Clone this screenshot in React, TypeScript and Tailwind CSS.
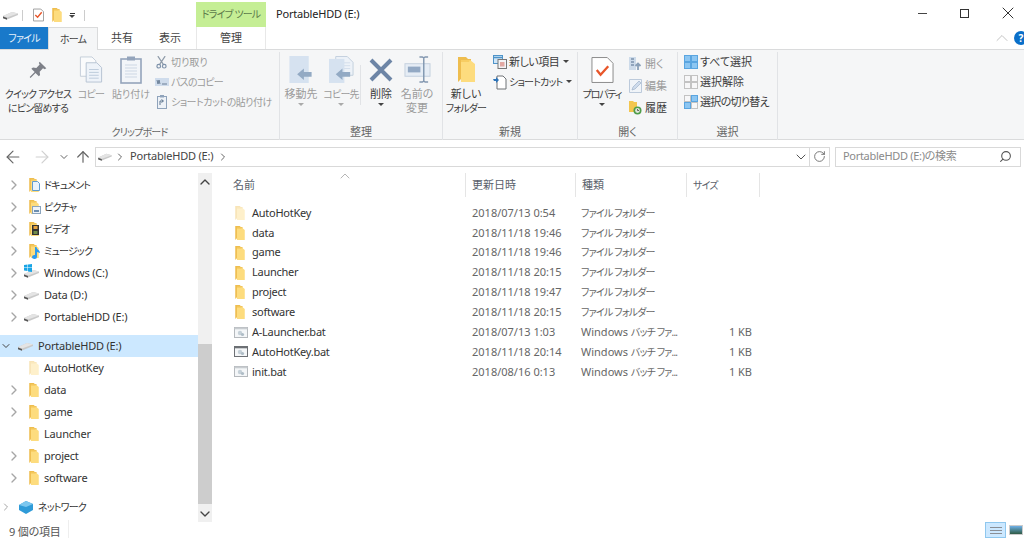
import React from "react";
import { ArrowLeft, ArrowRight, ArrowUp, ChevronDown, ChevronRight, ChevronUp, RotateCw, Search, X } from "lucide-react";

// katakana in Yu Gothic UI runs much narrower than Noto CJK
const K = ({ children }: { children: React.ReactNode }) => (
  <span className="text-[10px] tracking-[-0.8px]">{children}</span>
);

const Folder = ({ faded = false, big = false }: { faded?: boolean; big?: boolean }) => (
  <svg viewBox="0 0 17 25" className={`${big ? "w-[17px] h-[25px]" : "w-[10px] h-[14px]"} shrink-0 ${faded ? "opacity-40" : ""}`}>
    <path d="M0 0h8l2 2h3v20H3l-3 3z" fill="#eebd4f" />
    <path d="M3 3h9l5 4v18H3z" fill="#fddc7e" />
    <path d="M3 3h9l-1 2H3z" fill="#f7cd62" />
  </svg>
);

const Drive = ({ className = "w-[15px] h-[10px]" }: { className?: string }) => (
  <svg viewBox="0 0 15 10" className={`${className} shrink-0`}>
    <path d="M0 6l9-4 6 1.500V5L4 9.500 0 8z" fill="#c9c9c9" />
    <path d="M0 6l4 1.500 11-4-6-1.500z" fill="#e4e4e4" />
    <path d="M0 6.500l4 1.500v1.800L0 8.300z" fill="#555" />
  </svg>
);

const BatFile = ({ dark = false }: { dark?: boolean }) => (
  <svg viewBox="0 0 14 11" className="w-[14px] h-[11px] shrink-0">
    <rect x="0.5" y="0.5" width="13" height="10" fill="#f4f6f8" stroke={dark ? "#6d7075" : "#b5b9bd"} />
    <rect x="0.5" y="0.5" width="13" height="1.800" fill={dark ? "#6d7075" : "#c8ccd0"} />
    <circle cx="6" cy="6" r="2.200" fill="#c5d0d8" />
    <circle cx="8.500" cy="7.500" r="1.600" fill="#aebcc6" />
  </svg>
);

const Pin = () => (
  <svg viewBox="0 0 24 24" className="w-[20px] h-[20px]">
    <path d="M14 2l8 8-2 1-2-1-4 4 .5 4-1.500 1.500-4-4-6 6-1-1 6-6-4-4L6 9l4 .5 4-4-1-2z" fill="#7d8088" />
  </svg>
);

const CopyDocs = () => (
  <svg viewBox="0 0 24 28" className="w-[24px] h-[27px]">
    <path d="M1 1h12l4 4v16H1z" fill="#fafbfc" stroke="#c4cdd8" />
    <path d="M7 7h11l5 5v15H7z" fill="#eef3f9" stroke="#b6c3d2" />
    <path d="M10 14h10M10 17h10M10 20h10M10 23h10" stroke="#bccbdc" />
  </svg>
);

const Clipboard = () => (
  <svg viewBox="0 0 22 28" className="w-[22px] h-[28px]">
    <rect x="1" y="3" width="20" height="24" fill="#f2f5f9" stroke="#94a4bb" strokeWidth="1.600" />
    <rect x="7" y="0.500" width="8" height="4" fill="#94a4bb" />
    <path d="M5 9h12M5 12h12M5 15h12M5 18h12M5 21h12" stroke="#cdd7e4" />
  </svg>
);

const Scissors = () => (
  <svg viewBox="0 0 12 14" className="w-[11px] h-[13px]">
    <path d="M2 0l6 9M10 0L4 9" stroke="#8e9aa8" strokeWidth="1.300" fill="none" />
    <circle cx="3" cy="11" r="2" fill="none" stroke="#7f93ab" strokeWidth="1.300" />
    <circle cx="9" cy="11" r="2" fill="none" stroke="#7f93ab" strokeWidth="1.300" />
  </svg>
);

const PathCopy = () => (
  <svg viewBox="0 0 14 8" className="w-[14px] h-[8px]">
    <rect width="14" height="8" fill="#cfdcec" />
    <path d="M2 2l1 4 1-4 1 4M7 6h5" stroke="#6b7f96" fill="none" />
  </svg>
);

const PasteShortcut = () => (
  <svg viewBox="0 0 10 14" className="w-[10px] h-[14px]">
    <rect x="0.500" y="1.500" width="9" height="12" fill="#eef2f7" stroke="#8fa3bb" />
    <rect x="3" y="0" width="4" height="2.500" fill="#8fa3bb" />
    <path d="M3 10V6h3M4.500 4.500L6.500 6 4.500 7.500" stroke="#5e7690" fill="none" />
  </svg>
);

const MoveTo = () => (
  <svg viewBox="0 0 24 28" className="w-[24px] h-[27px]">
    <rect width="20" height="28" fill="#d6e2f0" />
    <path d="M8 19l7-6v3.500h8v5h-8V25z" fill="#93aac4" />
  </svg>
);

const CopyTo = () => (
  <svg viewBox="0 0 26 28" className="w-[25px] h-[27px]">
    <path d="M7 .5h12l6 6V20H7z" fill="#edf2f8" stroke="#c2cfde" />
    <path d="M10 7h12M10 10h12M10 13h12" stroke="#d3deeb" />
    <rect y="3" width="16" height="25" fill="#d6e2f0" />
    <path d="M7 19l7-6v3.500h8v5h-8V25z" fill="#93aac4" />
  </svg>
);

const Rename = () => (
  <svg viewBox="0 0 28 28" className="w-[27px] h-[27px]">
    <rect x="1" y="8" width="26" height="13" fill="#e6edf5" stroke="#c4d0de" />
    <rect x="4" y="11" width="13" height="6" fill="#93a9c4" />
    <path d="M16 1h3l1.500 1L22 1h3M20.500 2v24M16 27h3l1.500-1 1.500 1h3" stroke="#8297b0" strokeWidth="1.500" fill="none" />
  </svg>
);

const NewItem = () => (
  <svg viewBox="0 0 14 14" className="w-[14px] h-[14px]">
    <rect x="0.500" y="0.500" width="9" height="8" fill="#cfe6f8" stroke="#4f94c9" />
    <path d="M0 2.500h10" stroke="#4f94c9" strokeWidth="1.500" />
    <rect x="5" y="4.500" width="8.500" height="9" fill="#f3f4f6" stroke="#777" />
    <rect x="7" y="7" width="4.500" height="4.500" fill="#e2a8a2" />
  </svg>
);

const ShortcutIcon = () => (
  <svg viewBox="0 0 14 15" className="w-[14px] h-[15px]">
    <path d="M4 1h6l3 3v10H4z" fill="#fff" stroke="#6e7277" />
    <path d="M0 4h3V2l3 3-3 3V6H1z" fill="#2e74b8" />
  </svg>
);

const Properties = () => (
  <svg viewBox="0 0 24 28" className="w-[23px] h-[28px]">
    <path d="M1 1h16l6 6v20H1z" fill="#fff" stroke="#888" />
    <path d="M6 14l4 5 8-9" stroke="#e8562a" strokeWidth="2.400" fill="none" />
  </svg>
);

const OpenIcon = () => (
  <svg viewBox="0 0 13 14" className="w-[13px] h-[14px]">
    <rect width="7" height="13" fill="#cddbea" />
    <path d="M2 2h3M2 5h3M2 8h3" stroke="#7c93ad" strokeWidth="1.400" />
    <path d="M9 13V7M6.500 9L9 6.500 11.500 9" stroke="#8aa0b8" strokeWidth="1.800" fill="none" />
  </svg>
);

const EditIcon = () => (
  <svg viewBox="0 0 13 14" className="w-[13px] h-[14px]">
    <path d="M.5.500h12v13H.5z" fill="#f0f4f8" stroke="#bccadb" />
    <path d="M3 11l1-3 6-6 2 2-6 6z" fill="#cfdcec" stroke="#9fb3ca" strokeWidth=".7" />
  </svg>
);

const HistoryIcon = () => (
  <svg viewBox="0 0 13 14" className="w-[13px] h-[14px]">
    <path d="M0 0h4l1 1h3v10H0z" fill="#f3c64f" />
    <circle cx="8.500" cy="9.500" r="4" fill="#4f9d4a" />
    <circle cx="8.500" cy="9.500" r="2.400" fill="#dfe6da" />
    <path d="M8.500 8v1.500H10" stroke="#444" strokeWidth=".8" fill="none" />
  </svg>
);

const Grid4 = ({ variant }: { variant: "all" | "none" | "invert" }) => {
  const blue = { fill: "#8cc6f2", stroke: "#5aa5e0" };
  const gray = { fill: "#f7f7f8", stroke: "#c3c3c3" };
  const a = variant === "all" ? blue : gray;
  const b = variant === "none" ? gray : blue;
  const c = variant === "none" ? gray : blue;
  const d = variant === "all" ? blue : gray;
  return (
    <svg viewBox="0 0 14 14" className="w-[14px] h-[14px]">
      <rect x=".5" y=".5" width="6" height="6" {...a} />
      <rect x="7.500" y=".5" width="6" height="6" {...b} />
      <rect x=".5" y="7.500" width="6" height="6" {...c} />
      <rect x="7.500" y="7.500" width="6" height="6" {...d} />
    </svg>
  );
};

const Caret = ({ className = "" }: { className?: string }) => (
  <span className={`inline-block w-0 h-0 border-x-[3px] border-x-transparent border-t-[3px] border-t-[#444] ${className}`} />
);

const Big = ({ w, icon, label, dim, caret }: { w: string; icon: React.ReactNode; label: React.ReactNode; dim?: boolean; caret?: boolean }) => (
  <div className={`${w} flex flex-col items-center shrink-0 text-center leading-[14px] whitespace-nowrap ${dim ? "text-[#9b9b9b]" : "text-[#3c3c3c]"}`}>
    <div className="flex items-center justify-center h-[35px]">{icon}</div>
    <div>{label}</div>
    {caret && <Caret className={`mt-[2px] ${dim ? "border-t-[#aaa]" : ""}`} />}
  </div>
);

const Small = ({ icon, label, dim, caret }: { icon: React.ReactNode; label: React.ReactNode; dim?: boolean; caret?: boolean }) => (
  <div className={`h-[20px] flex items-center whitespace-nowrap ${dim ? "text-[#9b9b9b]" : "text-[#3c3c3c]"}`}>
    <span className="w-[15px] flex justify-center mr-[2px]">{icon}</span>
    {label}
    {caret && <Caret className="ml-[4px] mb-[1px]" />}
  </div>
);

const Group = ({ w, label, children }: { w: string; label: React.ReactNode; children: React.ReactNode }) => (
  <div className={`${w} shrink-0 h-[88px] mt-[2px] border-r border-[#e1e3e6] flex flex-col justify-between`}>
    <div className="flex">{children}</div>
    <div className="h-[14px] leading-[14px] text-center text-[#666] mb-[1px]">{label}</div>
  </div>
);

const NavRow = ({ level = 1, open, noChevron, icon, label, selected }: { level?: 0 | 1; open?: boolean; noChevron?: boolean; icon: React.ReactNode; label: React.ReactNode; selected?: boolean }) => (
  <div className={`h-[22px] flex items-center whitespace-nowrap text-[#333] ${selected ? "bg-[#cce8ff]" : ""}`}>
    <span className={`flex justify-center shrink-0 ${level === 1 ? "w-[28px]" : "w-[12px]"}`}>
      {!noChevron && (open ? <ChevronDown className="w-[14px] h-[14px] text-[#444]" strokeWidth={2} /> : <ChevronRight className="w-[16px] h-[16px] text-[#a6a6a6]" strokeWidth={2} />)}
    </span>
    <span className={`${level === 1 ? "w-[11px]" : "w-[21px]"} flex justify-end shrink-0 mr-[5px]`}>{icon}</span>
    <span className="tracking-[-0.2px]">{label}</span>
  </div>
);

const QuickFolder = ({ badge }: { badge: React.ReactNode }) => (
  <span className="relative w-[10px] h-[14px] flex">
    <Folder />
    <span className="absolute left-[3px] top-[3px]">{badge}</span>
  </span>
);

const files: { name: string; date: string; bat?: boolean; dark?: boolean; faded?: boolean }[] = [
  { name: "AutoHotKey", date: "2018/07/13 0:54", faded: true },
  { name: "data", date: "2018/11/18 19:46" },
  { name: "game", date: "2018/11/18 19:46" },
  { name: "Launcher", date: "2018/11/18 20:15" },
  { name: "project", date: "2018/11/18 19:47" },
  { name: "software", date: "2018/11/18 20:15" },
  { name: "A-Launcher.bat", date: "2018/07/13 1:03", bat: true },
  { name: "AutoHotKey.bat", date: "2018/11/18 20:14", bat: true, dark: true },
  { name: "init.bat", date: "2018/08/16 0:13", bat: true },
];

export default function App() {
  return (
    <div className="w-[1024px] h-[538px] overflow-hidden bg-white text-[11px] [font-feature-settings:'palt'] font-['Noto_Sans','Noto_Sans_CJK_JP',sans-serif] flex flex-col">
      {/* title bar */}
      <div className="h-[27px] flex items-start shrink-0">
        <div className="w-[196px] h-full flex items-center pl-[3px] pt-[3px]">
          <Drive />
          <span className="w-px h-[11px] bg-[#ccc] ml-[4px]" />
          <svg viewBox="0 0 12 14" className="w-[11px] h-[14px] ml-[10px]">
            <path d="M.5.500h8l3 3v10H.5z" fill="#fff" stroke="#999" />
            <path d="M2.500 7l2.500 2.500L9.500 4" stroke="#e8562a" strokeWidth="1.500" fill="none" />
          </svg>
          <span className="ml-[8px] flex"><Folder /></span>
          <span className="ml-[7px] flex flex-col items-center gap-[1px]">
            <span className="w-[5px] h-px bg-[#333]" />
            <Caret className="border-t-[#333]" />
          </span>
          <span className="w-px h-[11px] bg-[#ccc] ml-[9px]" />
        </div>
        <div className="w-[70px] h-[25px] mt-[2px] bg-[#c5ee95] text-[#5c7a4a] flex items-center justify-center whitespace-nowrap"><K>ドライブ ツール</K></div>
        <div className="ml-[10px] mt-[6px] text-[#222] leading-[15px] tracking-[-0.2px]">PortableHDD (E:)</div>
        <div className="ml-auto flex items-center h-[26px] text-[#333]">
          <span className="w-[42px] flex justify-center"><span className="w-[9px] h-px bg-[#444]" /></span>
          <span className="w-[43px] flex justify-center"><span className="w-[9px] h-[9px] border border-[#333]" /></span>
          <span className="w-[38px] flex justify-center pl-[6px]"><X className="w-[20px] h-[20px]" strokeWidth={1.200} /></span>
        </div>
      </div>

      {/* tabs */}
      <div className="h-[23px] flex shrink-0 border-b border-[#dadbdc] text-[#444] relative">
        <div className="w-[48px] bg-[#1979ca] text-[#e8f2fb] flex items-center justify-center"><K>ファイル</K></div>
        <div className="w-[50px] h-[23px] bg-[#f5f6f7] border-x border-t border-[#dadbdc] flex items-center justify-center"><K>ホーム</K></div>
        <div className="w-[48px] flex items-center justify-center">共有</div>
        <div className="w-[48px] flex items-center justify-center">表示</div>
        <div className="w-[2px]" />
        <div className="w-[70px] h-[22px] border-x border-[#e8e8e8] flex items-center justify-center">管理</div>
        <div className="ml-auto flex items-center">
          <ChevronUp className="w-[20px] h-[20px] text-[#c4c4c4]" strokeWidth={1.200} />
          <span className="w-[14px] h-[14px] ml-[2px] -mr-[4px] rounded-full bg-[#0a6fc9] text-white text-[10px] font-bold leading-[14px] text-center">?</span>
        </div>
      </div>

      {/* ribbon */}
      <div className="h-[90px] bg-[#f5f6f7] border-b border-[#dadbdc] flex shrink-0">
        <Group w="w-[280px]" label={<K>クリップボード</K>}>
          <Big w="w-[76px]" icon={<Pin />} label={<K>クイック アクセス<br />にピン留めする</K>} />
          <Big w="w-[30px]" dim icon={<CopyDocs />} label={<K>コピー</K>} />
          <span className="w-[6px] shrink-0" />
          <Big w="w-[38px]" dim icon={<Clipboard />} label={<span className="text-[10px]">貼り付け</span>} />
          <div className="ml-[4px]">
            <Small dim icon={<Scissors />} label={<span className="text-[10px]">切り取り</span>} />
            <Small dim icon={<PathCopy />} label={<K>パスのコピー</K>} />
            <Small dim icon={<PasteShortcut />} label={<span className="text-[10px] tracking-[-0.5px]">ショートカットの貼り付け</span>} />
          </div>
        </Group>
        <Group w="w-[163px]" label="整理">
          <Big w="w-[42px]" dim caret icon={<MoveTo />} label="移動先" />
          <Big w="w-[38px]" dim caret icon={<CopyTo />} label={<K>コピー先</K>} />
          <span className="w-px h-[40px] mt-[13px] bg-[#e1e3e6] shrink-0" />
          <Big w="w-[40px]" caret icon={<svg viewBox="0 0 24 24" className="w-[24px] h-[24px]"><path d="M2 2L22 22M22 2L2 22" stroke="#6d85a6" strokeWidth="4" /></svg>} label="削除" />
          <Big w="w-[32px]" dim icon={<Rename />} label={<>名前の<br />変更</>} />
        </Group>
        <Group w="w-[135px]" label="新規">
          <Big w="w-[46px]" icon={<Folder big />} label={<>新しい<br /><K>フォルダー</K></>} />
          <div className="ml-[3px]">
            <Small icon={<NewItem />} label={<span className="tracking-[-0.5px]">新しい項目</span>} caret />
            <Small icon={<ShortcutIcon />} label={<K>ショートカット</K>} caret />
          </div>
        </Group>
        <Group w="w-[100px]" label="開く">
          <Big w="w-[48px]" caret icon={<Properties />} label={<span className="text-[10px] tracking-[-1.2px]">プロパティ</span>} />
          <div className="mt-[2px] ml-[2px]">
            <div className="h-[22px]"><Small dim icon={<OpenIcon />} label="開く" /></div>
            <div className="h-[22px]"><Small dim icon={<EditIcon />} label="編集" /></div>
            <div className="h-[22px]"><Small icon={<HistoryIcon />} label="履歴" /></div>
          </div>
        </Group>
        <Group w="w-[100px]" label="選択">
          <div className="ml-[5px]">
            <Small icon={<Grid4 variant="all" />} label="すべて選択" />
            <Small icon={<Grid4 variant="none" />} label="選択解除" />
            <Small icon={<Grid4 variant="invert" />} label={<span className="tracking-[-0.7px]">選択の切り替え</span>} />
          </div>
        </Group>
      </div>

      {/* address bar */}
      <div className="h-[33px] flex items-center shrink-0 text-[#444]">
        <div className="w-[95px] flex items-center shrink-0">
          <span className="w-[26px] flex justify-center"><ArrowLeft className="w-[20px] h-[20px] text-[#666]" strokeWidth={1.400} /></span>
          <span className="w-[32px] flex justify-center"><ArrowRight className="w-[20px] h-[20px] text-[#d0d0d0]" strokeWidth={1.400} /></span>
          <span className="w-[12px] flex justify-center"><ChevronDown className="w-[14px] h-[14px] text-[#666]" strokeWidth={2} /></span>
          <span className="w-[25px] flex justify-center"><ArrowUp className="w-[18px] h-[18px] text-[#666]" strokeWidth={1.600} /></span>
        </div>
        <div className="w-[735px] h-[20px] border border-[#d9d9d9] flex items-center shrink-0">
          <span className="ml-[2px]"><Drive className="w-[14px] h-[9px]" /></span>
          <ChevronRight className="w-[12px] h-[12px] ml-[2px] text-[#666]" strokeWidth={2} />
          <span className="ml-[4px] tracking-[-0.2px]">PortableHDD (E:)</span>
          <ChevronRight className="w-[12px] h-[12px] ml-[4px] text-[#666]" strokeWidth={2} />
          <ChevronDown className="w-[16px] h-[16px] ml-auto text-[#555]" strokeWidth={1.500} />
          <span className="h-full w-[20px] border-l border-[#d9d9d9] flex items-center justify-center">
            <RotateCw className="w-[13px] h-[13px] text-[#666]" strokeWidth={1.600} />
          </span>
        </div>
        <div className="w-[186px] h-[20px] ml-[5px] border border-[#d9d9d9] flex items-center pl-[7px] text-[#8a8a8a] whitespace-nowrap tracking-[-0.3px]">
          PortableHDD (E:)の検索
          <Search className="w-[13px] h-[13px] ml-auto mr-[8px] -scale-x-100 text-[#555]" strokeWidth={2} />
        </div>
      </div>

      {/* body */}
      <div className="h-[349px] flex shrink-0">
        <div className="w-[198px] shrink-0 overflow-hidden pt-px">
          <NavRow icon={<QuickFolder badge={<svg viewBox="0 0 8 10" className="w-[8px] h-[10px]"><path d="M.5.500h5l2 2v7H.5z" fill="#e9f2fa" stroke="#5e9bd0" /></svg>} />} label={<K>ドキュメント</K>} />
          <NavRow icon={<QuickFolder badge={<svg viewBox="0 0 9 8" className="w-[9px] h-[8px] mt-[3px]"><rect x=".5" y=".5" width="8" height="7" fill="#eef3f8" stroke="#8aa4bd" /><rect x="2" y="4" width="5" height="2" fill="#6d8fb0" /></svg>} />} label={<K>ピクチャ</K>} />
          <NavRow icon={<QuickFolder badge={<svg viewBox="0 0 7 10" className="w-[7px] h-[10px]"><rect width="7" height="10" fill="#333" /><rect x="1.500" y="1" width="4" height="3" fill="#e8a33d" /><rect x="1.500" y="6" width="4" height="3" fill="#6f8c4a" /></svg>} />} label={<K>ビデオ</K>} />
          <NavRow icon={<QuickFolder badge={<svg viewBox="0 0 9 12" className="w-[9px] h-[12px]"><path d="M3 0h1.500c.5 3 3.500 3 3.500 6l-3-1v5a2.500 2 0 1 1-2-2z" fill="#2b9bf0" /></svg>} />} label={<K>ミュージック</K>} />
          <NavRow icon={<span className="relative flex"><Drive /><svg viewBox="0 0 8 8" className="absolute -top-[4px] left-0 w-[8px] h-[8px]"><path d="M0 1l3.500-.5V3.500H0zM4 .4L8 0v3.500H4zM0 4h3.500v3L0 6.500zM4 4h4v4l-4-.5z" fill="#19a5e6" /></svg></span>} label="Windows (C:)" />
          <NavRow icon={<Drive />} label="Data (D:)" />
          <NavRow icon={<Drive />} label="PortableHDD (E:)" />
          <div className="h-[7px]" />
          <NavRow level={0} open selected icon={<Drive />} label="PortableHDD (E:)" />
          <NavRow noChevron icon={<Folder faded />} label="AutoHotKey" />
          <NavRow icon={<Folder />} label="data" />
          <NavRow icon={<Folder />} label="game" />
          <NavRow noChevron icon={<Folder />} label="Launcher" />
          <NavRow icon={<Folder />} label="project" />
          <NavRow icon={<Folder />} label="software" />
          <div className="h-[7px]" />
          <NavRow level={0} icon={<svg viewBox="0 0 14 13" className="w-[14px] h-[13px]"><path d="M7 0l7 3v6l-7 4-7-4V4z" fill="#2f9bd8" /><path d="M7 0l7 3-7 3-7-2z" fill="#7cc7ef" /></svg>} label={<K>ネットワーク</K>} />
        </div>
        <div className="w-[14px] shrink-0 bg-[#f0f0f0] flex flex-col items-center">
          <ChevronUp className="w-[16px] h-[16px] mt-[1px] text-[#444]" strokeWidth={2} />
          <div className="w-full h-[160px] mt-[154px] bg-[#cdcdcd]" />
          <ChevronDown className="w-[16px] h-[16px] mt-[2px] text-[#444]" strokeWidth={2} />
        </div>
        <div className="flex-1 pl-[15px]">
          <div className="h-[24px] relative grid grid-cols-[239px_110px_111px_73px] text-[#5a5f6b]">
            <ChevronUp className="absolute left-[110px] -top-[5px] w-[16px] h-[16px] text-[#b5b5b5]" strokeWidth={1.500} />
            {["名前", "更新日時", "種類"].map((h) => (
              <div key={h} className="border-r border-[#e5e5e5] pl-[6px] pt-[1px] flex items-center">{h}</div>
            ))}
            <div className="border-r border-[#e5e5e5] pl-[6px] pt-[1px] flex items-center"><K>サイズ</K></div>
          </div>
          <div className="mt-[6px]">
            {files.map((f) => (
              <div key={f.name} className="h-[19.870px] grid grid-cols-[239px_110px_111px_73px] items-center whitespace-nowrap text-[#666]">
                <div className="flex items-center text-[#333] pl-[6px]">
                  <span className="w-[19px] flex shrink-0 pl-[1px]">{f.bat ? <BatFile dark={f.dark} /> : <span className="pl-[1px] flex"><Folder faded={f.faded} /></span>}</span>
                  <span className="tracking-[-0.25px]">{f.name}</span>
                </div>
                <div className="pl-[6px]">{f.date}</div>
                <div className="pl-[5px]">{f.bat ? <>Windows <K>バッチ ファ...</K></> : <K>ファイル フォルダー</K>}</div>
                <div className="pr-[8px] text-right">{f.bat ? "1 KB" : ""}</div>
              </div>
            ))}
          </div>
        </div>
      </div>

      {/* status bar */}
      <div className="flex-1 flex items-center text-[#555] min-h-0">
        <span className="pl-[9px] pt-[4px] w-[69px] border-r border-[#eee] tracking-[-0.2px]">9 個の項目</span>
        <div className="ml-auto flex items-center self-end">
          <span className="w-[21px] h-[16px] bg-[#cce8ff] border border-[#8fc7ee] flex flex-col justify-center gap-[2px] pl-[4px]">
            <span className="w-[12px] h-px bg-[#8a8f96]" />
            <span className="w-[12px] h-px bg-[#8a8f96]" />
            <span className="w-[12px] h-px bg-[#8a8f96]" />
          </span>
          <span className="w-[14px] h-[10px] ml-[3px] mr-[1px] mb-[1px] border border-[#ccc] bg-gradient-to-b from-[#6fb0e8] to-[#2f5a44]" />
        </div>
      </div>
    </div>
  );
}
